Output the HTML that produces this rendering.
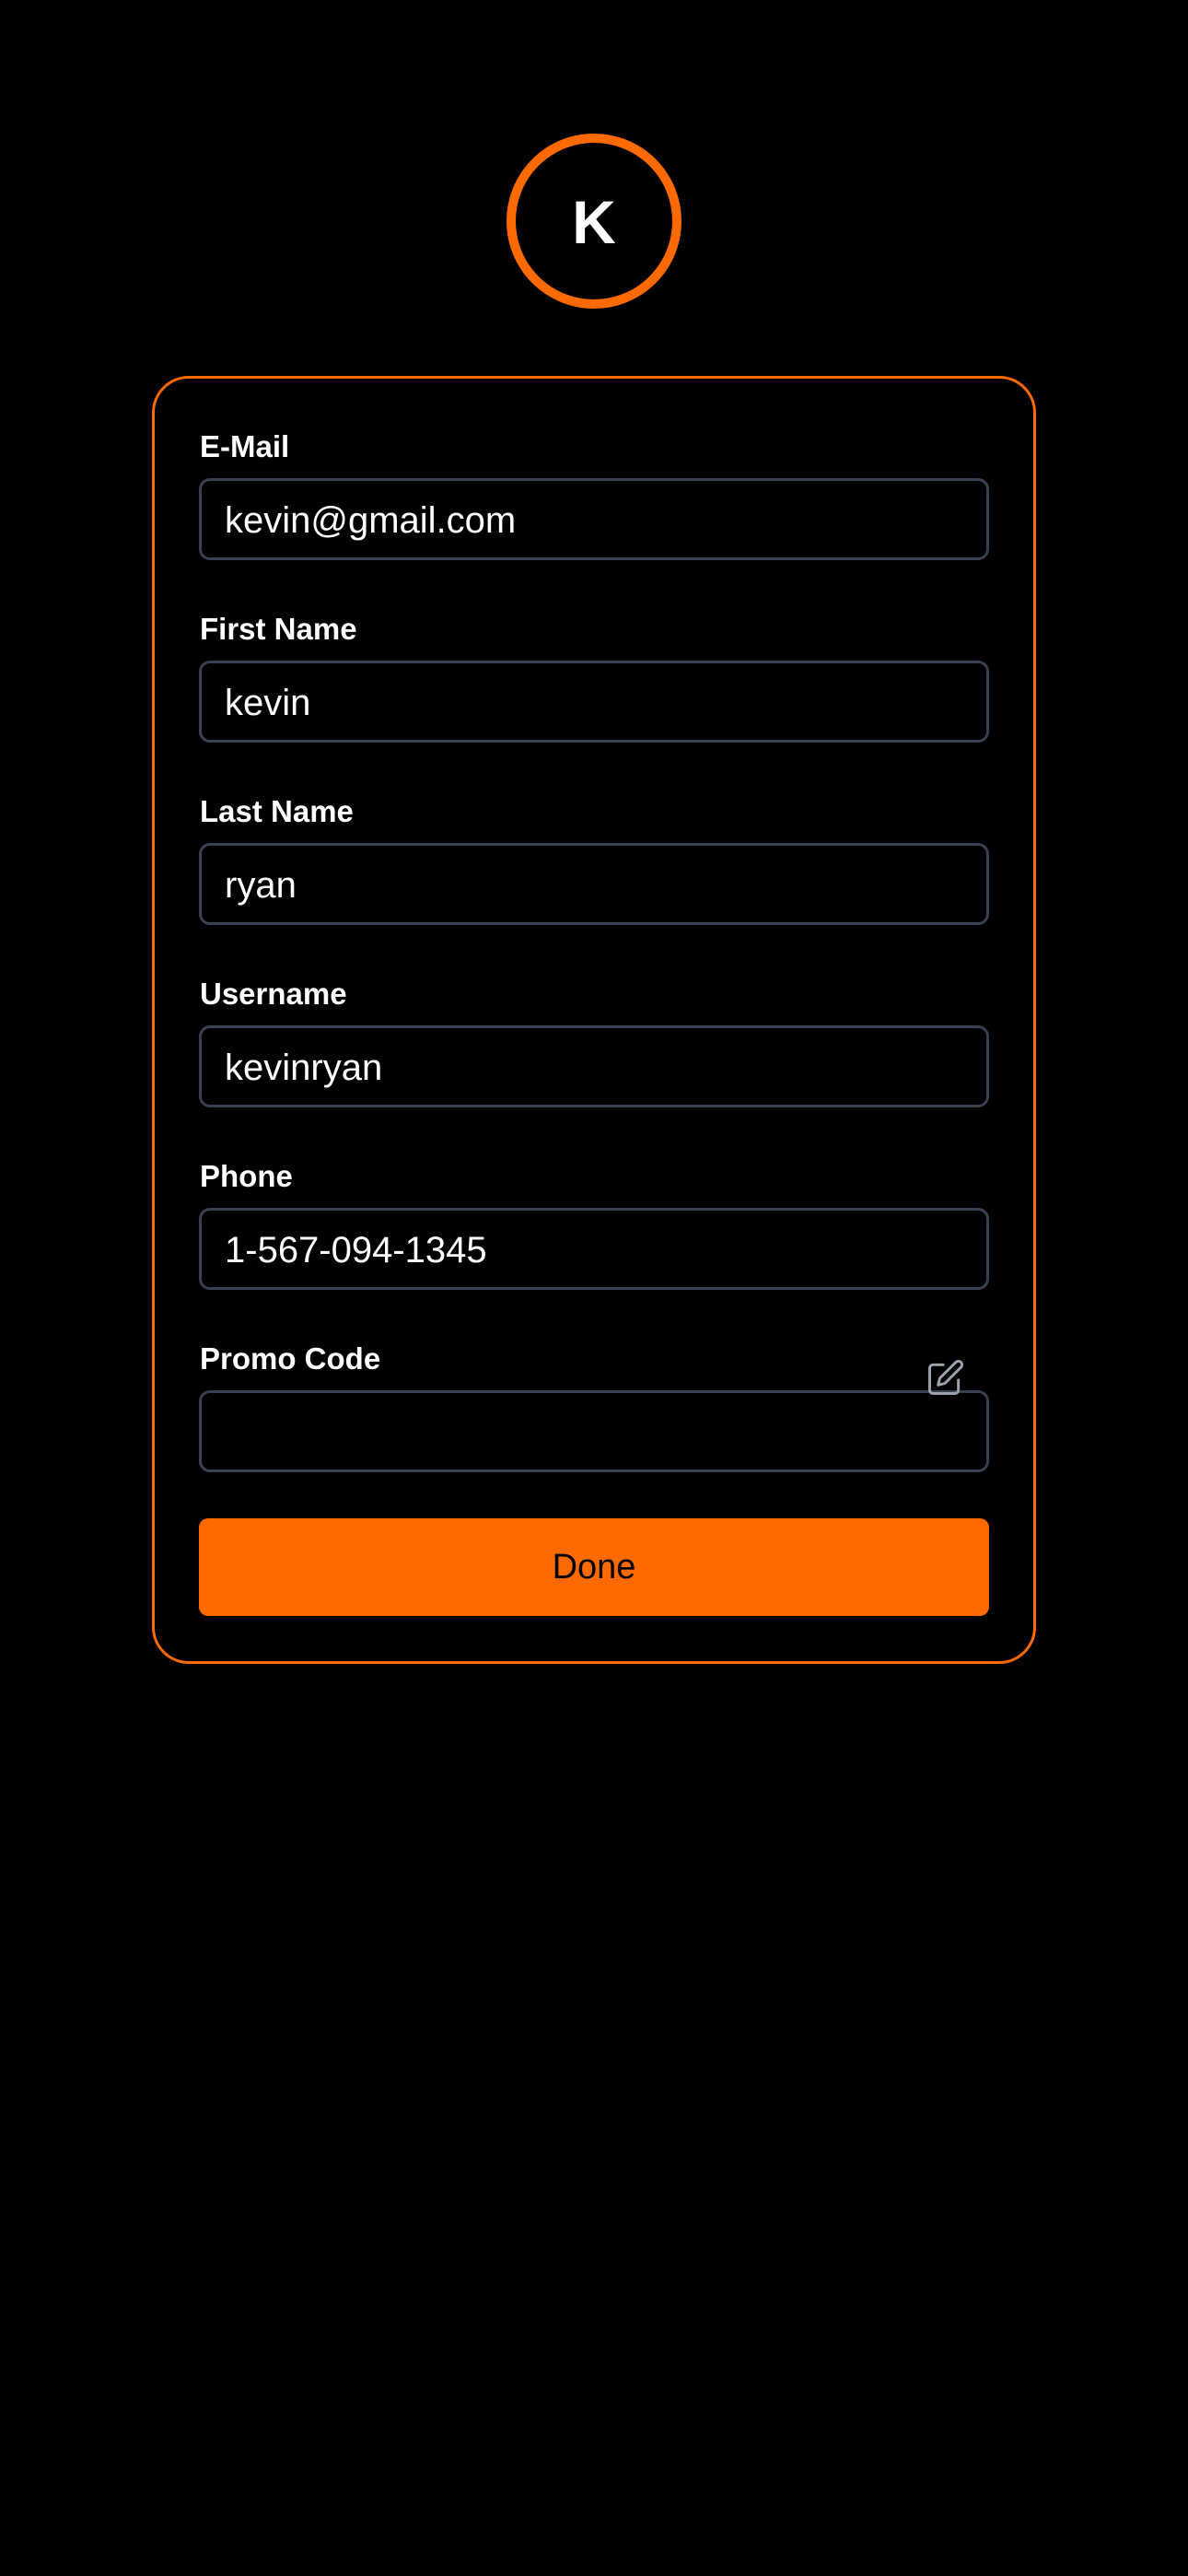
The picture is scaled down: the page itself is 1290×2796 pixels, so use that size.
<!DOCTYPE html>
<html><head><meta charset="utf-8"><style>
html,body{margin:0;padding:0;background:#000;width:1290px;height:2796px;overflow:hidden;font-family:"Liberation Sans",sans-serif;}
.av{position:absolute;left:550px;top:145px;width:170px;height:170px;border:10px solid #ff6a00;border-radius:50%;color:#fff;font-weight:bold;font-size:66px;text-align:center;line-height:172px;}
.card{position:absolute;left:165px;top:408px;width:960px;height:1398px;border:3px solid #ff6a00;border-radius:40px;box-sizing:border-box;}
.lbl{position:absolute;left:217px;color:#fff;font-size:33px;font-weight:bold;line-height:40px;}
.inp{position:absolute;left:216px;width:858px;height:89px;border:3px solid #374151;border-radius:12px;box-sizing:border-box;color:#fff;font-size:40px;line-height:87px;padding-left:25px;}
.btn{position:absolute;left:216px;top:1648px;width:858px;height:106px;background:#ff6a00;border-radius:10px;color:#000;font-size:38px;text-align:center;line-height:106px;font-weight:500;}
</style></head><body>
<div class="av">K</div>
<div class="card"></div>
<div class="lbl" style="top:465px">E-Mail</div>
<div class="inp" style="top:519px">kevin@gmail.com</div>
<div class="lbl" style="top:663px">First Name</div>
<div class="inp" style="top:717px">kevin</div>
<div class="lbl" style="top:861px">Last Name</div>
<div class="inp" style="top:915px">ryan</div>
<div class="lbl" style="top:1059px">Username</div>
<div class="inp" style="top:1113px">kevinryan</div>
<div class="lbl" style="top:1257px">Phone</div>
<div class="inp" style="top:1311px">1-567-094-1345</div>
<div class="lbl" style="top:1455px">Promo Code</div>
<div class="inp" style="top:1509px"></div>
<svg style="position:absolute;left:1004px;top:1474px" width="44" height="44" viewBox="0 0 24 24" fill="none" stroke="#9ca3af" stroke-width="1.6" stroke-linecap="round" stroke-linejoin="round"><path d="M11 4H5a2 2 0 0 0-2 2v13a2 2 0 0 0 2 2h13a2 2 0 0 0 2-2v-6"/><path d="M18.5 2.5a2.1 2.1 0 0 1 3 3L12 15l-4 1 1-4z"/></svg>
<div class="btn">Done</div>
</body></html>
